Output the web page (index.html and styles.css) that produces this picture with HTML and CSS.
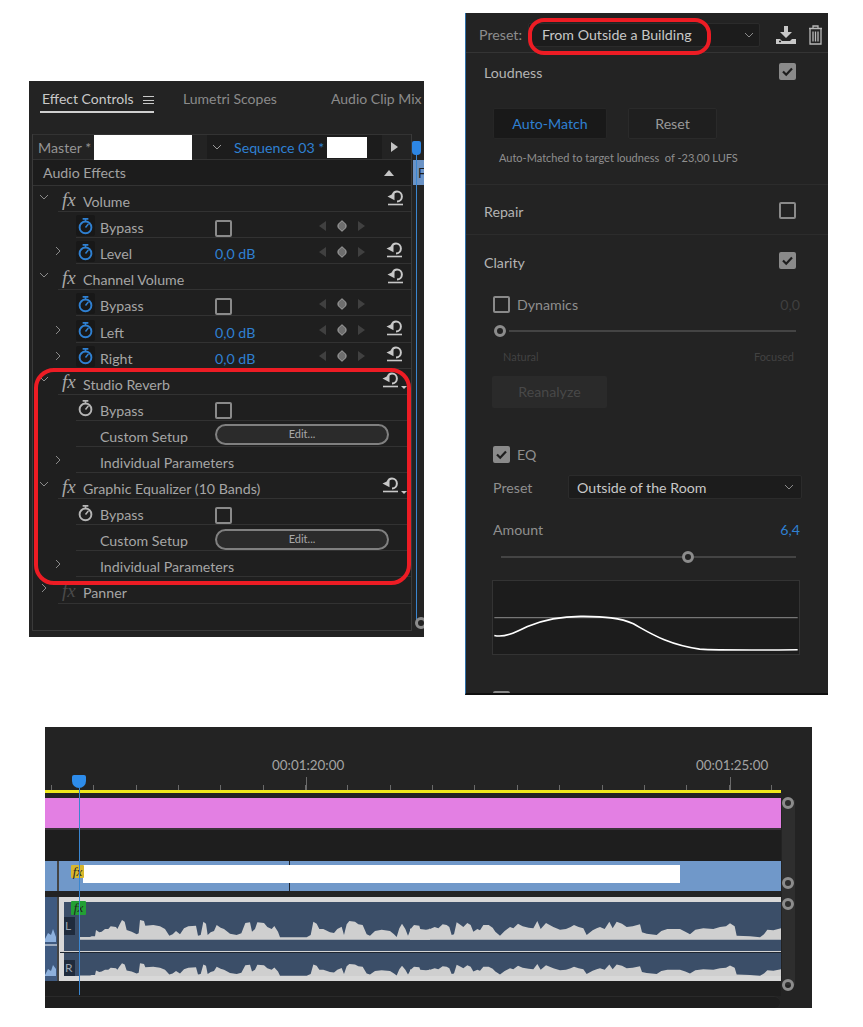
FILE: index.html
```html
<!DOCTYPE html>
<html lang="en">
<head>
<meta charset="utf-8">
<title>Premiere Pro panels</title>
<link rel="stylesheet" href="styles.css">
</head>
<body>
<svg class="defs" aria-hidden="true">
  <symbol id="watch" viewBox="0 0 20 20"><circle cx="10" cy="11.5" r="6.2" fill="none" stroke="currentColor" stroke-width="2"/><path d="M7 2.5h6M10 3v2.5M10 11.5l3-3.5" fill="none" stroke="currentColor" stroke-width="1.6"/></symbol>
  <symbol id="reset" viewBox="0 0 17 17"><path d="M5.5 6.2C6.3 3.8 8 2.6 10 2.6a4.9 4.9 0 0 1 0 9.8" fill="none" stroke="currentColor" stroke-width="2"/><path d="M0.5 7.6 7.5 4.2v7z" fill="currentColor"/><path d="M1 15.5h15" stroke="currentColor" stroke-width="1.6"/></symbol>
  <symbol id="keys" viewBox="0 0 48 12"><path d="M8 1v10L1 6z" fill="#404040"/><path d="M24 .7l4 3.8v3l-4 3.8-4-3.8v-3z" fill="#6e6e6e" stroke="#a6a6a6"/><path d="M40 1v10l7-5z" fill="#404040"/></symbol>
  <symbol id="cd" viewBox="0 0 10 6"><path d="M1 1l4 4 4-4" fill="none" stroke="currentColor"/></symbol>
  <symbol id="cr" viewBox="0 0 6 10"><path d="M1 1l4 4-4 4" fill="none" stroke="currentColor"/></symbol>
  <symbol id="chk" viewBox="0 0 17 17"><path d="M4 8.5l3.2 3.2L13 5.5" fill="none" stroke="#1d1d1d" stroke-width="2.2"/></symbol>
</svg>

<div class="top">
  <section class="ec">
    <header class="tabs">
      <div class="tab active">Effect Controls <span class="burger"></span></div>
      <div class="tab t-lumetri">Lumetri Scopes</div>
      <div class="tab t-mix">Audio Clip Mix</div>
    </header>
    <div class="ec-body">
      <div class="frame">
        <div class="srcbar">
          <span class="master">Master *</span><span class="mask m1"></span>
          <div class="seq">
            <svg class="chev-d"><use href="#cd"/></svg>
            <span class="blue">Sequence 03 *</span><span class="mask m2"></span>
          </div>
          <span class="play"></span>
        </div>
        <div class="ae-head">Audio Effects<span class="up"></span></div>

        <div class="row fx-row"><svg class="chev-d c-e"><use href="#cd"/></svg><i class="fx">fx</i><span class="lbl">Volume</span><svg class="rst"><use href="#reset"/></svg></div>
        <div class="row sub"><span></span><span class="sw"><svg><use href="#watch"/></svg></span><span class="lbl">Bypass</span><span class="cb"></span><svg class="keys"><use href="#keys"/></svg><span></span></div>
        <div class="row sub"><svg class="chev-r"><use href="#cr"/></svg><span class="sw"><svg><use href="#watch"/></svg></span><span class="lbl">Level</span><span class="lbl blue">0,0 dB</span><svg class="keys"><use href="#keys"/></svg><svg class="rst"><use href="#reset"/></svg></div>

        <div class="row fx-row"><svg class="chev-d c-e"><use href="#cd"/></svg><i class="fx">fx</i><span class="lbl">Channel Volume</span><svg class="rst"><use href="#reset"/></svg></div>
        <div class="row sub"><span></span><span class="sw"><svg><use href="#watch"/></svg></span><span class="lbl">Bypass</span><span class="cb"></span><svg class="keys"><use href="#keys"/></svg><span></span></div>
        <div class="row sub"><svg class="chev-r"><use href="#cr"/></svg><span class="sw"><svg><use href="#watch"/></svg></span><span class="lbl">Left</span><span class="lbl blue">0,0 dB</span><svg class="keys"><use href="#keys"/></svg><svg class="rst"><use href="#reset"/></svg></div>
        <div class="row sub"><svg class="chev-r"><use href="#cr"/></svg><span class="sw"><svg><use href="#watch"/></svg></span><span class="lbl">Right</span><span class="lbl blue">0,0 dB</span><svg class="keys"><use href="#keys"/></svg><svg class="rst"><use href="#reset"/></svg></div>

        <div class="row fx-row"><svg class="chev-d c-e"><use href="#cd"/></svg><i class="fx">fx</i><span class="lbl">Studio Reverb</span><span class="rst-m"><svg class="rst"><use href="#reset"/></svg><span class="tri"></span></span></div>
        <div class="row sub"><span></span><span class="sw off"><svg><use href="#watch"/></svg></span><span class="lbl">Bypass</span><span class="cb"></span><span></span><span></span></div>
        <div class="row sub"><span></span><span></span><span class="lbl">Custom Setup</span><span class="edit">Edit...</span></div>
        <div class="row sub"><svg class="chev-r"><use href="#cr"/></svg><span></span><span class="lbl wide">Individual Parameters</span></div>

        <div class="row fx-row"><svg class="chev-d c-e"><use href="#cd"/></svg><i class="fx">fx</i><span class="lbl">Graphic Equalizer (10 Bands)</span><span class="rst-m"><svg class="rst"><use href="#reset"/></svg><span class="tri"></span></span></div>
        <div class="row sub"><span></span><span class="sw off"><svg><use href="#watch"/></svg></span><span class="lbl">Bypass</span><span class="cb"></span><span></span><span></span></div>
        <div class="row sub"><span></span><span></span><span class="lbl">Custom Setup</span><span class="edit">Edit...</span></div>
        <div class="row sub"><svg class="chev-r"><use href="#cr"/></svg><span></span><span class="lbl wide">Individual Parameters</span></div>

        <div class="row fx-row"><svg class="chev-r c-p"><use href="#cr"/></svg><i class="fx dim">fx</i><span class="lbl">Panner</span><span></span></div>
      </div>
      <div class="strip">
        <span class="ph-mini"></span>
        <span class="strip-clip">F</span>
        <span class="strip-line"></span>
        <span class="knob strip-knob"></span>
      </div>
    </div>
    <div class="red-box"></div>
  </section>

  <section class="sound">
    <div class="presetbar">
      <span class="pl">Preset:</span>
      <div class="dd dd-top"><span>From Outside a Building</span><svg class="chev-d"><use href="#cd"/></svg></div>
      <svg class="ic-dl" viewBox="0 0 20 18"><path d="M8 0h4v6h4l-6 6-6-6h4z" fill="#c8c8c8"/><path d="M0 13h4l2 2h8l2-2h4v5H0z" fill="#c8c8c8"/><path d="M3 15.5h2" stroke="#222" stroke-width="1.4"/></svg>
      <svg class="ic-tr" viewBox="0 0 15 20"><path d="M1 3.5h13M5 3V1h5v2M2 4v15h11V4M5 6.5v10M7.5 6.5v10M10 6.5v10" fill="none" stroke="#b8b8b8" stroke-width="1.3"/></svg>
    </div>
    <div class="red-oval"></div>

    <div class="sec s-loud">
      <div class="sec-head"><span class="hd">Loudness</span><span class="cb on"><svg><use href="#chk"/></svg></span></div>
      <div class="btns"><span class="btn am">Auto-Match</span><span class="btn rs">Reset</span></div>
      <p class="note">Auto-Matched to target loudness&nbsp; of -23,00 LUFS</p>
    </div>
    <div class="sec s-rep">
      <div class="sec-head"><span class="hd">Repair</span><span class="cb"></span></div>
    </div>
    <div class="s-clar">
      <div class="sec-head"><span class="hd">Clarity</span><span class="cb on"><svg><use href="#chk"/></svg></span></div>
      <div class="opt o-dyn"><span class="cb"></span><span class="opt-l">Dynamics</span><span class="val-dim">0,0</span></div>
      <div class="slider sl-dyn"><span class="knob"></span><span class="track"></span></div>
      <div class="ends"><span>Natural</span><span>Focused</span></div>
      <span class="btn rean">Reanalyze</span>
      <div class="opt o-eq"><span class="cb on"><svg><use href="#chk"/></svg></span><span class="opt-l">EQ</span></div>
      <div class="eq-preset"><span class="opt-l">Preset</span><div class="dd dd-eq"><span>Outside of the Room</span><svg class="chev-d"><use href="#cd"/></svg></div></div>
      <div class="amount"><span class="opt-l">Amount</span><span class="blue">6,4</span></div>
      <div class="slider sl-amt"><span class="track t-a"></span><span class="knob"></span><span class="track"></span></div>
      <svg class="graph" viewBox="96 690 924 225" preserveAspectRatio="none"><path d="M100 803H1016" stroke="#767676" stroke-width="4"/><path d="M100 858C130 865 160 850 200 830C260 805 320 798 370 799C430 800 480 803 520 822C570 850 620 885 720 900C780 904 900 903 1016 902" fill="none" stroke="#fff" stroke-width="5"/></svg>
      <div class="opt o-last"><span class="cb on"></span></div>
    </div>
  </section>
</div>

<section class="tl">
  <div class="tl-main">
    <div class="ruler">
      <span class="tc tc1">00:01:20:00</span><span class="bigtick bt1"></span>
      <span class="tc tc2">00:01:25:00</span><span class="bigtick bt2"></span>
    </div>
    <div class="track pink"></div>
    <div class="track empty"></div>
    <div class="track video">
      <span class="v-stub"></span>
      <div class="v-clip"><span class="cut"></span><span class="mask m3"></span><i class="badge yellow">fx</i></div>
    </div>
    <div class="track audio">
      <span class="a-stub"><svg viewBox="0 0 12 84"><path d="M0 42L3 36 6 38 8 32 11 40V45H0zM0 78L3 72 6 74 8 68 11 72V79H0z" fill="#8db0dc"/><path d="M0 48H12" stroke="#fff" stroke-width="1"/></svg></span>
      <div class="a-clip">
        <svg class="wave" viewBox="0 0 2151 222" preserveAspectRatio="none">
          <defs>
            <g id="wf">
              <path transform="translate(-72 0)" d="M120 644V636H150L155 634 165 634 168 615 178 622 185 620 195 612 205 612 212 604 228 606 232 612 238 600 246 585 254 590 260 615 275 620 290 628 296 625 300 585 312 588 316 602 340 600 360 604 375 612 388 632 398 628 408 618 420 628 432 610 445 604 468 602 474 632 482 630 490 590 498 596 503 630 512 622 522 618 530 600 542 608 552 612 570 626 590 630 604 625 616 594 630 592 636 620 645 612 652 592 672 594 682 606 695 612 703 603 714 620 720 637H800L812 630 820 590 830 596 838 612 850 612 870 622 882 624 892 612 905 605 912 630 920 598 928 588 945 590 955 598 968 600 980 628 990 632 1005 618 1025 614 1050 618 1062 628 1070 636 1078 610 1086 596 1096 612 1104 632 1112 612 1122 600 1138 602 1146 632 1160 620 1170 610V644z"/>
              <path transform="translate(1098 0)" d="M-60 644V610L-46 622-30 612-12 614 0 612 14 606 25 610 38 598 50 600 58 606 65 630 72 628 80 592 92 600 100 606 112 594 122 600 130 620 142 612 150 616 160 600 176 600 188 608 196 620 210 632 224 618 240 606 250 610 264 596 278 604 296 608 310 610 322 588 332 612 348 594 370 606 390 614 408 612 422 606 432 600 446 606 460 610 470 630 488 616 500 610 510 606 524 612 538 590 548 610 560 590 576 596 590 606 608 604 630 598 636 622 650 626 680 630 694 618 712 612 750 612 766 620 780 628 796 614 820 610 850 612 870 606 888 604 900 595 914 604 920 632 960 634 990 637 1002 628 1012 614 1030 616 1053 610V644z"/>
            </g>
          </defs>
          <use href="#wf" transform="translate(0 -531)" fill="#cfcfcf"/>
          <use href="#wf" transform="translate(0 221) scale(1 .72) translate(0 -637)" fill="#cfcfcf"/>
        </svg>
        <span class="chan c-l">L</span>
        <span class="chan c-r">R</span>
        <span class="divider"></span>
        <i class="badge green">fx</i>
      </div>
    </div>
    <div class="track floor"></div>
    <div class="hscroll"></div>
  </div>
  <div class="vscroll">
    <span class="knob kv1"></span><span class="knob kv2"></span><span class="knob kv3"></span><span class="knob kv4"></span>
  </div>
  <span class="playhead"></span>
</section>
</body>
</html>
```
FILE: styles.css
```css
* { box-sizing: border-box; }
html, body { margin: 0; background: #fff; }
body { width: 863px; height: 1027px; overflow: hidden; font-family: "Lato", "Noto Sans", sans-serif; font-size: 14.2px; color: #a6a6a6; }
.defs { position: absolute; width: 0; height: 0; }
.blue { color: #2f80d2; }
.mask { background: #fff; display: block; }

/* knobs */
.knob { display: block; width: 12px; height: 12px; border: 3px solid #8c8c8c; border-radius: 50%; flex: none; }

.top { display: flex; align-items: flex-start; padding: 13px 0 0 29px; gap: 41px; height: 727px; }

/* Effect controls */
.ec { position: relative; width: 395px; height: 556px; margin-top: 68px; background: #232323; overflow: hidden; }
.tabs { height: 53px; position: relative; }
.tab { position: absolute; top: 8px; font-size: 14px; line-height: 20px; color: #8b8b8b; white-space: nowrap; }
.tab.active { left: 11px; width: 114px; height: 24px; padding-left: 2px; color: #c9c9c9; border-bottom: 2px solid #cfcfcf; }
.burger { display: inline-block; width: 11px; height: 8px; margin-left: 6px; border-top: 1px solid #c9c9c9; border-bottom: 1px solid #c9c9c9; position: relative; }
.burger::after { content: ""; position: absolute; left: 0; right: 0; top: 2.5px; height: 1px; background: #c9c9c9; }
.t-lumetri { left: 154px; }
.t-mix { left: 302px; }

.ec-body { display: flex; padding-left: 3px; }
.frame { width: 380px; height: 497px; border: 1px solid #3a3a3a; border-top: 0; background: #1f1f1f; }
.srcbar { height: 26px; display: flex; align-items: center; background: #232323; border-top: 1px solid #333; border-bottom: 1px solid #333; padding-left: 5px; color: #959595; }
.master { width: 56px; }
.m1 { width: 98px; height: 25px; }
.seq { width: 175px; margin-left: 15px; height: 24px; display: flex; align-items: center; background: #1c1c1c; padding-left: 5px; }
.seq .chev-d { width: 10px; height: 6px; color: #9a9a9a; margin-right: 12px; }
.m2 { width: 40px; height: 21px; margin-left: 3px; }
.play { width: 0; height: 0; margin-left: 9px; border-left: 7px solid #c4c4c4; border-top: 5px solid transparent; border-bottom: 5px solid transparent; }
.ae-head { height: 26px; display: flex; align-items: center; justify-content: space-between; padding: 0 17px 0 10px; background: #1c1c1c; border-bottom: 1px solid #333; color: #a2a2a2; }
.up { width: 0; height: 0; border-left: 5px solid transparent; border-right: 5px solid transparent; border-bottom: 6px solid #c4c4c4; }

.row { display: grid; height: 26.1px; align-items: center; position: relative; }
.row::after { content: ""; position: absolute; right: 0; bottom: 0; height: 1px; background: #323232; }
.fx-row { grid-template-columns: 29px 21px 1fr 24px; }
.fx-row::after { left: 25px; }
.sub { grid-template-columns: 43px 24px 115px 103px 68px 25px; }
.sub::after { left: 43px; }
.lbl { padding-top: 5px; white-space: nowrap; }
.wide { grid-column: span 3; }
.chev-d { display: block; width: 10px; height: 6px; color: #8a8a8a; }
.chev-r { display: block; width: 6px; height: 10px; color: #8a8a8a; margin-left: 22px; }
.c-e { margin: -5px 0 0 6px; }
.c-p { margin: -5px 0 0 8px; }
.fx { font-family: "Liberation Serif", serif; font-style: italic; font-size: 19px; line-height: 20px; color: #a8a8a8; margin-top: 1px; }
.fx.dim { color: #4a4a4a; }
.rst { display: block; width: 17px; height: 17px; color: #c8c8c8; margin-top: -4px; }
.rst-m { display: flex; align-items: flex-end; margin-left: -5px; }
.rst-m .rst { flex: none; }
.tri { width: 0; height: 0; margin: 0 0 -1px 2px; border-left: 3px solid transparent; border-right: 3px solid transparent; border-top: 3px solid #c8c8c8; }
.sw { display: flex; width: 19px; height: 21px; align-items: center; justify-content: center; background: #181818; border-radius: 2px; color: #2f80d2; margin-top: 1px; }
.sw svg { width: 20px; height: 20px; }
.sw.off { background: none; color: #b5b5b5; }
.cb { display: block; width: 17px; height: 17px; border: 2px solid #8a8a8a; border-radius: 2px; flex: none; }
.row .cb { margin-top: 6px; }
.cb.on { background: #8a8a8a; }
.cb svg { display: block; width: 17px; height: 17px; margin: -2px; }
.keys { display: block; width: 48px; height: 12px; margin-top: 1px; }
.edit { grid-column: span 3; width: 174px; height: 21px; border: 2px solid #808080; border-radius: 11px; background: #2b2b2b; color: #a8a8a8; font-size: 11px; line-height: 16px; text-align: center; margin-top: 2px; }

.strip { position: relative; width: 12px; }
.ph-mini { position: absolute; left: 0; top: 7px; width: 9px; height: 14px; background: #2d86e4; border-radius: 2px 2px 4px 4px; }
.strip-clip { position: absolute; left: 1px; top: 26px; width: 11px; height: 25px; background: #6b93c6; color: #1d1d1d; font-size: 13px; padding-left: 5px; line-height: 26px; overflow: hidden; }
.strip-line { position: absolute; left: 4px; top: 21px; width: 1px; height: 466px; background: #3a86d0; }
.strip-knob { position: absolute; left: 3px; top: 483px; }
.red-box { position: absolute; left: 5px; top: 287px; width: 377px; height: 217px; border: 4px solid #ed1c24; border-radius: 20px; }

/* Essential sound */
.sound { position: relative; width: 363px; height: 682px; overflow: hidden; background: #232323; border-left: 1px solid #2e6fa8; border-bottom: 2px solid #0f0f0f; flex: none; color: #a6a6a6; }
.presetbar { height: 40px; display: flex; align-items: center; padding: 4px 0 0 13px; border-bottom: 1px solid #343434; }
.pl { width: 49px; color: #8d8d8d; }
.dd { display: flex; align-items: center; justify-content: space-between; height: 24px; background: #1c1c1c; border: 1px solid #2b2b2b; border-radius: 2px; color: #c8c8c8; }
.dd-top { width: 232px; padding: 0 5px 0 13px; }
.dd-top .chev-d, .dd-eq .chev-d { flex: none; }
.ic-dl { width: 20px; height: 18px; margin-left: 16px; }
.ic-tr { width: 15px; height: 20px; margin-left: 12px; }
.red-oval { position: absolute; left: 62px; top: 5px; width: 183px; height: 37px; border: 4px solid #ed1c24; border-radius: 16px; }

.sec { border-bottom: 1px solid #2c2c2c; }
.sec-head { display: flex; align-items: center; justify-content: space-between; padding: 0 32px 0 18px; }
.hd { padding-top: 3px; color: #b4b4b4; }
.s-loud .hd { padding-top: 1px; }
.s-loud { height: 132px; }
.s-loud .sec-head { height: 37px; }
.btns { display: flex; gap: 21px; padding-left: 27px; margin-top: 18px; }
.btn { display: block; height: 31px; line-height: 31px; text-align: center; border-radius: 2px; }
.am { width: 114px; background: #191919; border: 1px solid #262626; color: #2f80d2; line-height: 29px; }
.rs { width: 89px; background: #1f1f1f; border: 1px solid #2a2a2a; color: #999; line-height: 29px; }
.note { margin: 11px 0 0 33px; font-size: 11px; line-height: 16px; color: #8f8f8f; }
.s-rep { height: 50px; }
.s-rep .sec-head { height: 50px; }
.s-clar .sec-head { height: 51px; }
.opt { display: flex; align-items: center; padding-left: 27px; }
.opt-l { color: #8f8f8f; }
.opt .opt-l { margin-left: 7px; padding-top: 1px; }
.o-dyn { margin-top: 9px; padding-right: 28px; }
.val-dim { margin-left: auto; color: #3f3f3f; }
.slider { display: flex; align-items: center; }
.track { display: block; height: 2px; background: #444; flex: 1; }
.sl-dyn { margin: 12px 32px 0 28px; gap: 3px; }
.ends { display: flex; justify-content: space-between; margin: 13px 34px 0 37px; font-size: 11px; line-height: 14px; color: #424242; }
.rean { width: 115px; height: 32px; line-height: 32px; margin: 12px 0 0 26px; background: #2a2a2a; color: #484848; }
.o-eq { margin-top: 37px; }
.eq-preset { display: flex; align-items: center; padding-left: 27px; margin-top: 12px; }
.eq-preset .opt-l { width: 75px; }
.dd-eq { width: 234px; padding: 0 7px 0 8px; }
.amount { display: flex; justify-content: space-between; padding: 0 28px 0 27px; margin-top: 21px; line-height: 20px; }
.sl-amt { margin: 11px 32px 0 35px; gap: 0; }
.t-a { flex: none; width: 181px; }
.graph { display: block; width: 308px; height: 75px; margin: 17px 0 0 26px; background: #1c1c1c; border: 1px solid #333; }
.o-last { margin-top: 36px; }
.o-last .cb { border-color: #8a8a8a; }

/* Timeline */
.tl { position: relative; width: 767px; height: 281px; margin-left: 45px; background: #232323; display: flex; }
.tl-main { width: 736px; }
.ruler { position: relative; height: 66px; border-bottom: 3px solid #efe81c; background-image: repeating-linear-gradient(90deg, #6a6a6a 0 1px, transparent 1px 42.35px); background-size: 100% 5px; background-position: 6px bottom; background-repeat: no-repeat; }
.tc { position: absolute; top: 28px; font-size: 13.4px; line-height: 20px; color: #a3a3a3; white-space: nowrap; }
.tc1 { left: 227px; }
.tc2 { left: 651px; }
.bigtick { position: absolute; bottom: 0; width: 1px; height: 13px; background: #6a6a6a; }
.bt1 { left: 261px; }
.bt2 { left: 685px; }
.track { display: block; }
.pink { height: 32px; margin-top: 5px; background: #e37fe3; border-bottom: 2px solid #3a323a; }
.empty { height: 31px; background: #1e1e1e; border-top: 1px solid #1e1e1e; }
.video { height: 30px; display: flex; gap: 2px; }
.v-stub { width: 12px; background: #7098c9; }
.v-clip { position: relative; flex: 1; background: #7098c9; }
.cut { position: absolute; left: 230px; top: 0; bottom: 0; width: 1px; background: #1d2530; }
.m3 { position: absolute; left: 24px; top: 4px; width: 597px; height: 18px; }
.badge { position: absolute; font-family: "Liberation Serif", serif; font-style: italic; font-size: 13px; line-height: 14px; text-align: center; color: #222; border-radius: 1px; }
.yellow { left: 12px; top: 4px; width: 13px; height: 13px; background: #d8b62b; }
.audio { height: 84px; margin-top: 6px; display: flex; gap: 2px; }
.a-stub { width: 12px; background: #3f5a80; }
.a-stub svg { display: block; width: 12px; height: 84px; }
.a-clip { position: relative; flex: 1; background: #3b4e68; border: 5px solid #d8d8d8; border-right: 0; }
.wave { display: block; width: 717px; height: 74px; }
.chan { position: absolute; left: 0; width: 11px; height: 18px; background: #1f2b3c; color: #9aa3ae; font-size: 12px; line-height: 18px; padding-left: 1px; }
.c-l { top: 15px; }
.c-r { top: 58px; height: 16px; line-height: 16px; }
.divider { position: absolute; left: -4px; right: 0; top: 49px; height: 2px; background: #d4d4d4; border-bottom: 1px solid #1d2530; }
.green { left: 7px; top: -1px; width: 15px; height: 14px; background: #23a034; }
.floor { height: 15px; background: #1e1e1e; }
.hscroll { height: 12px; background: #1e1e1e; border-top: 1px solid #2a2a2a; border-radius: 0 8px 8px 0; width: 735px; }
.vscroll { position: relative; width: 13px; height: 185px; margin: 73px 0 0 1px; background: #2e2e2e; }
.vscroll .knob { position: absolute; left: 0; }
.kv1 { top: -3px; }
.kv2 { top: 77px; }
.kv3 { top: 98px; }
.kv4 { top: 179px; }
.playhead { position: absolute; left: 27px; top: 48px; width: 14px; height: 13px; background: #2d8ceb; border-radius: 2px 2px 7px 7px; }
.playhead::after { content: ""; position: absolute; left: 7px; top: 13px; width: 1px; height: 207px; background: #3a86d0; }
```
